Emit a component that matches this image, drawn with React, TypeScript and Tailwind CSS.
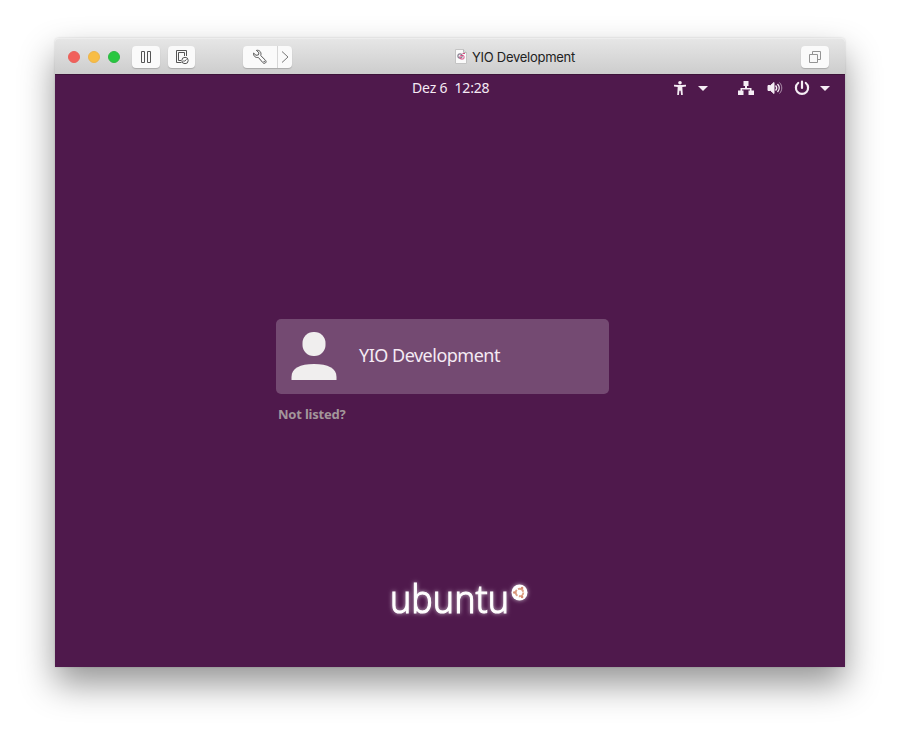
import React from 'react';

function TitleBar() {
  return (
    <header className="grid h-9 shrink-0 grid-cols-[400px_auto_1fr] items-center rounded-t-[4px] border-t border-[#ededed] bg-gradient-to-b from-[#e6e6e6] to-[#cdcdcd] pr-4">
      <div className="flex items-center pl-[13px]">
        <div className="flex gap-2">
          <span className="size-3 rounded-full border border-[#e9625b] bg-[#f1605b]" />
          <span className="size-3 rounded-full border border-[#edb44b] bg-[#f8bd45]" />
          <span className="size-3 rounded-full border border-[#2fb744] bg-[#28c740]" />
        </div>
        <div className="ml-3 flex h-[22px] w-7 items-center justify-center rounded-[4px] bg-[#fafafa] shadow-[0_1px_1px_#aaaaaa]">
          <svg className="size-4" viewBox="0 0 16 16" fill="none" stroke="#555" strokeWidth="1">
            <path d="M3.5 2.5h3v11h-3zM9.5 2.5h3v11h-3z" />
          </svg>
        </div>
        <div className="ml-2 flex h-[22px] w-[27px] items-center justify-center rounded-[4px] bg-[#fafafa] shadow-[0_1px_1px_#aaaaaa]">
          <svg className="size-4" viewBox="0 0 16 16" fill="none" stroke="#555" strokeWidth="1">
            <path d="M12.5 7V1.5h-10v12h5M7 11.5H4.5v-8h6V7" />
            <circle cx="11" cy="11.5" r="3.2" />
            <path d="m9.2 12 1.6.1 1.7-1.8" />
          </svg>
        </div>
        <div className="ml-12 flex h-[22px] w-[49px] rounded-[4px] bg-[#fafafa] shadow-[0_1px_1px_#aaaaaa]">
          <div className="flex w-[35px] items-center justify-center border-r border-[#d6d6d6]">
            <svg className="size-4" viewBox="0 0 16 16" fill="none" stroke="#555" strokeWidth="1" strokeLinejoin="round">
              <path d="M4.4 1.4 7 3.8 6.4 5.9 4 6.3 1.6 4.1C1.2 7 3.6 9.1 6.3 8.4l4.6 5.3c1.7 1.9 4.4-.6 2.6-2.4L8.7 6.5C9.8 3.4 7.5.6 4.4 1.4z" />
              <circle cx="12.2" cy="12.5" r=".35" />
            </svg>
          </div>
          <div className="flex flex-1 items-center justify-center">
            <svg className="h-3 w-2" viewBox="0 0 8 12" fill="none" stroke="#777" strokeWidth="1">
              <path d="m1 .5 6 5.5-6 5.5" />
            </svg>
          </div>
        </div>
      </div>
      <div className="flex items-center gap-1">
        <svg className="h-[15px] w-3" viewBox="0 0 12 15">
          <path d="M.5.5h8l3 3v11H.5z" fill="#fafafa" stroke="#c4c4c4" />
          <path d="M8.5.5v3h3" fill="#ddd" stroke="#b9b9b9" />
          <rect x="3" y="5" width="4" height="4" rx="1" fill="none" stroke="#655a70" />
          <rect x="5" y="6.5" width="4" height="3.5" rx="1" fill="none" stroke="#d54d83" />
          <path d="M7.5 4.5h2.5" stroke="#d54d83" />
        </svg>
        <h1 className="ml-px whitespace-nowrap font-['Inter','Liberation_Sans',sans-serif] text-[13px] leading-5 tracking-[-0.27px] text-[#222]">YIO Development</h1>
      </div>
      <div className="flex justify-end">
        <div className="flex h-[22px] w-7 items-center justify-center rounded-[4px] bg-[#fafafa] shadow-[0_1px_1px_#aaaaaa]">
          <svg className="size-3" viewBox="0 0 12 12" fill="none" stroke="#949494">
            <path d="M.5 3.5h8v8h-8zM3.5 3.5v-3h8v8h-3" />
          </svg>
        </div>
      </div>
    </header>
  );
}

function DownArrow() {
  return (
    <svg className="h-[5px] w-[10px]" viewBox="0 0 10 5" fill="#f5edf4"><path d="M0 0h10L5 5z" /></svg>
  );
}

function SystemBar() {
  return (
    <div className="grid h-[26px] grid-cols-[357px_auto_1fr] items-center pr-[15px] text-[#f5eaf4]">
      <span />
      <time className="whitespace-pre font-['Noto_Sans','Open_Sans',sans-serif] text-[14px] leading-5 tracking-[-0.15px]">Dez 6  12:28</time>
      <div className="flex items-center justify-end">
        <svg className="size-[14px]" viewBox="0 0 14 14" fill="#f5edf4">
          <circle cx="7" cy="1.8" r="1.8" />
          <path d="M1 3.7 5.3 4h3.4l4.3-.3v1.7l-3.7.7.5 7.9H8.1l-.5-4.3H6.4L5.9 14H4.2l.5-7.9L1 5.4z" />
        </svg>
        <div className="ml-[11px]"><DownArrow /></div>
        <svg className="ml-[30px] h-[14px] w-4" viewBox="0 0 16 14" fill="#f5edf4">
          <path d="M5.5 0h5v5H9v2h4.5v2.5H16V14h-5.5V9.5H12v-1H4v1h1.5V14H0V9.5h2.5V7H7V5H5.5z" />
        </svg>
        <svg className="ml-[13px] h-[14px] w-4" viewBox="0 0 16 14" fill="none" stroke="#f5edf4">
          <path d="M1 4.5h2.5L7 1.5v11l-3.5-3H1z" fill="#f5edf4" />
          <path d="M8.5 4.5c1.3 1.4 1.3 3.6 0 5" strokeWidth="1.4" />
          <path d="M10.5 3c2.2 2.3 2.2 5.7 0 8" strokeWidth="1.4" />
          <path d="M12.5 1.5c3 3.2 3 7.8 0 11" strokeWidth=".8" opacity=".7" />
        </svg>
        <svg className="ml-[11px] size-4" viewBox="0 0 16 16" fill="none" stroke="#f5edf4" strokeWidth="2.2" strokeLinecap="round">
          <path d="M4.2 3A6.1 6.1 0 1 0 11.8 3M8 1.5V8" />
        </svg>
        <div className="ml-[10px]"><DownArrow /></div>
      </div>
    </div>
  );
}

function UbuntuLogo() {
  return (
    <svg className="mt-[141px] ml-[327px] h-[68px] w-[156px]" viewBox="0 -10 156 68" role="img" aria-label="ubuntu">
      <defs>
        <filter id="glow" x="-10%" y="-30%" width="120%" height="160%">
          <feDropShadow dx="0" dy="0" stdDeviation="2" floodColor="#fff" floodOpacity=".65" />
        </filter>
      </defs>
      <g filter="url(#glow)">
        <text x="8" y="38" textLength="119" lengthAdjust="spacingAndGlyphs" fill="#fff" stroke="#fff" strokeWidth="1.1" className="font-['Noto_Sans','Open_Sans',sans-serif] text-[39px] font-light">ubuntu</text>
        <circle cx="137.5" cy="17.5" r="8" fill="#fff" />
      </g>
      <g fill="none" stroke="#dda085" strokeWidth="1.9">
        <circle cx="137.5" cy="17.5" r="3.8" strokeDasharray="6.5 1.45" />
      </g>
      <g fill="#d58c71">
        <circle cx="132.3" cy="17.5" r="1.3" />
        <circle cx="140.1" cy="13" r="1.3" />
        <circle cx="140.1" cy="22" r="1.3" />
      </g>
    </svg>
  );
}

export default function App() {
  return (
    <div className="h-[740px] w-[900px] overflow-hidden bg-white px-[55px] pt-[38px]">
      <main className="flex h-[629px] w-[790px] flex-col rounded-t-[4px] shadow-[0_17px_35px_rgba(0,0,0,0.42),0_0_2px_rgba(0,0,0,0.18)]">
        <TitleBar />
        <section className="flex-1 border-t border-[#3d1339] bg-[#4f194c]">
          <SystemBar />
          <div className="mt-[218px] ml-[221px] flex h-[75px] w-[333px] items-center rounded-[5px] bg-[#744a72] pb-[2px]">
            <svg className="ml-[15px] h-12 w-[46px]" viewBox="0 0 46 48" fill="#f0eeee">
              <rect x="11.5" y="0" width="23" height="24" rx="11" />
              <path d="M.5 48v-3C.5 36 9 32 23 32s22.5 4 22.5 13v3z" />
            </svg>
            <span className="ml-[22px] whitespace-nowrap pb-[2px] font-['Noto_Sans','Open_Sans',sans-serif] text-[18px] leading-6 tracking-[-0.5px] text-[#f5eaf4]">YIO Development</span>
          </div>
          <a className="mt-[10px] ml-[223px] block h-5 font-['Noto_Sans','Open_Sans',sans-serif] text-[13px] leading-5 font-bold tracking-[-0.2px] text-[#a3969b]">Not listed?</a>
          <UbuntuLogo />
        </section>
      </main>
    </div>
  );
}
